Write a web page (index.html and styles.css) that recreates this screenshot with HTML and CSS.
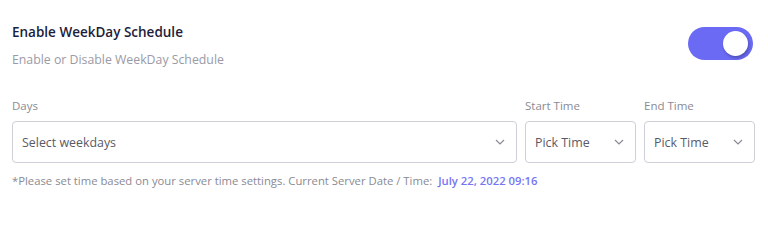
FILE: index.html
```html
<!DOCTYPE html>
<html>
<head>
<meta charset="utf-8">
<link rel="stylesheet" href="styles.css">
</head>
<body>
<div class="panel">
  <div class="header">
    <div class="header-text">
      <div class="title">Enable WeekDay Schedule</div>
      <div class="subtitle">Enable or Disable WeekDay Schedule</div>
    </div>
    <div class="toggle"><span class="knob"></span></div>
  </div>
  <div class="fields">
    <div class="field field-days">
      <div class="label">Days</div>
      <div class="select">
        <span>Select weekdays</span>
        <svg class="chev" width="10" height="6" viewBox="0 0 10 6"><path d="M1 1l4 4 4-4" fill="none" stroke="#8a8a96" stroke-width="1.2"/></svg>
      </div>
    </div>
    <div class="field field-time">
      <div class="label">Start Time</div>
      <div class="select">
        <span>Pick Time</span>
        <svg class="chev" width="10" height="6" viewBox="0 0 10 6"><path d="M1 1l4 4 4-4" fill="none" stroke="#8a8a96" stroke-width="1.2"/></svg>
      </div>
    </div>
    <div class="field field-time">
      <div class="label">End Time</div>
      <div class="select">
        <span>Pick Time</span>
        <svg class="chev" width="10" height="6" viewBox="0 0 10 6"><path d="M1 1l4 4 4-4" fill="none" stroke="#8a8a96" stroke-width="1.2"/></svg>
      </div>
    </div>
  </div>
  <div class="note">*Please set time based on your server time settings. Current Server Date / Time: <span class="date">July 22, 2022 09:16</span></div>
</div>
</body>
</html>
```
FILE: styles.css
```css
html, body {
  margin: 0;
  padding: 0;
  background: #ffffff;
}
body {
  font-family: "Open Sans", "Noto Sans", sans-serif;
}
.panel {
  padding: 22px 13px 0 12px;
}
.header {
  display: flex;
  justify-content: space-between;
  align-items: flex-start;
}
.title {
  font-size: 13.5px;
  font-weight: 600;
  color: #1d1d3b;
  line-height: 20px;
}
.subtitle {
  margin-top: 8px;
  font-size: 12.3px;
  color: #9a9aa6;
  line-height: 20px;
}
.toggle {
  margin-top: 5px;
  margin-right: 2px;
  width: 65px;
  height: 33px;
  border-radius: 17px;
  background: #6a6af4;
  display: flex;
  align-items: center;
  justify-content: flex-end;
  padding-right: 5px;
  box-sizing: border-box;
}
.knob {
  width: 25px;
  height: 25px;
  border-radius: 50%;
  background: #ffffff;
  box-shadow: 1px 2px 3px rgba(0,0,0,0.25);
}
.fields {
  display: flex;
  gap: 8px;
  margin-top: 28px;
}
.field-days {
  flex: 1;
}
.field-time {
  width: 111px;
}
.label {
  font-size: 11.5px;
  color: #8a8a94;
  line-height: 16px;
  margin-bottom: 7px;
}
.select {
  height: 42px;
  box-sizing: border-box;
  border: 1px solid #cfcfd8;
  border-radius: 4px;
  display: flex;
  align-items: center;
  justify-content: space-between;
  padding: 0 11px 0 9px;
  font-size: 12.4px;
  color: #5a5a66;
}
.chev {
  display: block;
}
.note {
  margin-top: 10px;
  font-size: 11.3px;
  color: #8a8a94;
  line-height: 16px;
}
.date {
  color: #7676f2;
  font-weight: 600;
  margin-left: 3px;
}
```
